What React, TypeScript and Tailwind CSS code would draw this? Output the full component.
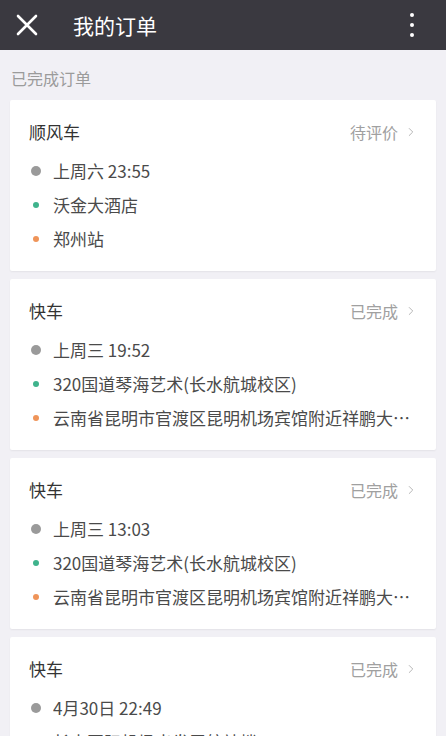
import { ChevronRight } from 'lucide-react'

type Order = {
  kind: string
  status: string
  time: string
  from: string
  to: string
}

const ORDERS: Order[] = [
  { kind: '顺风车', status: '待评价', time: '上周六 23:55', from: '沃金大酒店', to: '郑州站' },
  { kind: '快车', status: '已完成', time: '上周三 19:52', from: '320国道琴海艺术(长水航城校区)', to: '云南省昆明市官渡区昆明机场宾馆附近祥鹏大酒店' },
  { kind: '快车', status: '已完成', time: '上周三 13:03', from: '320国道琴海艺术(长水航城校区)', to: '云南省昆明市官渡区昆明机场宾馆附近祥鹏大酒店' },
  { kind: '快车', status: '已完成', time: '4月30日 22:49', from: '长水国际机场出发层航站楼', to: '昆明市' },
]

function Row({ dot, text }: { dot: 'time' | 'from' | 'to'; text: string }) {
  return (
    <div className="flex items-center h-[34px]">
      <div className="w-[26px] flex justify-center shrink-0">
        {dot === 'time' && <span className="w-[10px] h-[10px] rounded-full bg-[#9a9a9a]" />}
        {dot === 'from' && <span className="w-[6px] h-[6px] rounded-full bg-[#3fb38c]" />}
        {dot === 'to' && <span className="w-[6px] h-[6px] rounded-full bg-[#ef9459]" />}
      </div>
      <span className="ml-[4px] text-[17px] text-[#4a4a4a] truncate">{text}</span>
    </div>
  )
}

export default function App() {
  return (
    <div className="w-[446px] h-[736px] overflow-hidden bg-[#f1f0f5] flex flex-col" style={{ fontFamily: '"Noto Sans CJK SC", "Noto Sans", sans-serif' }}>
      <div className="h-[50px] bg-[#3a3940] flex items-center shrink-0">
        <svg width="22" height="22" viewBox="0 0 22 22" className="ml-[16px]">
          <path d="M2 2 L20 20 M20 2 L2 20" stroke="#fff" strokeWidth="2.6" strokeLinecap="round" />
        </svg>
        <span className="ml-[35px] text-[21px] text-white leading-none">我的订单</span>
        <div className="ml-auto mr-[32px] flex flex-col gap-[6px] items-center">
          <span className="w-[4px] h-[4px] rounded-full bg-white" />
          <span className="w-[4px] h-[4px] rounded-full bg-white" />
          <span className="w-[4px] h-[4px] rounded-full bg-white" />
        </div>
      </div>

      <div className="px-[11px] pt-[16px] pb-[10px] text-[16px] text-[#9b9b9b] leading-[24px]">已完成订单</div>

      <div className="flex flex-col gap-[8px] px-[10px]">
        {ORDERS.map((o, i) => (
          <div key={i} className="bg-white rounded-[2px] shadow-[0_1px_2px_rgba(0,0,0,0.06)] pl-[19px] pr-[18px] pt-[18px] pb-[15px] shrink-0">
            <div className="flex items-center justify-between h-[28px]">
              <span className="text-[17px] text-[#333]">{o.kind}</span>
              <span className="flex items-center text-[16px] text-[#a0a0a0]">
                {o.status}
                <ChevronRight size={14} strokeWidth={1.6} className="ml-[6px] text-[#b0b0b0]" />
              </span>
            </div>
            <div className="mt-[8px] -ml-[6px]">
              <Row dot="time" text={o.time} />
              <Row dot="from" text={o.from} />
              <Row dot="to" text={o.to} />
            </div>
          </div>
        ))}
      </div>
    </div>
  )
}
